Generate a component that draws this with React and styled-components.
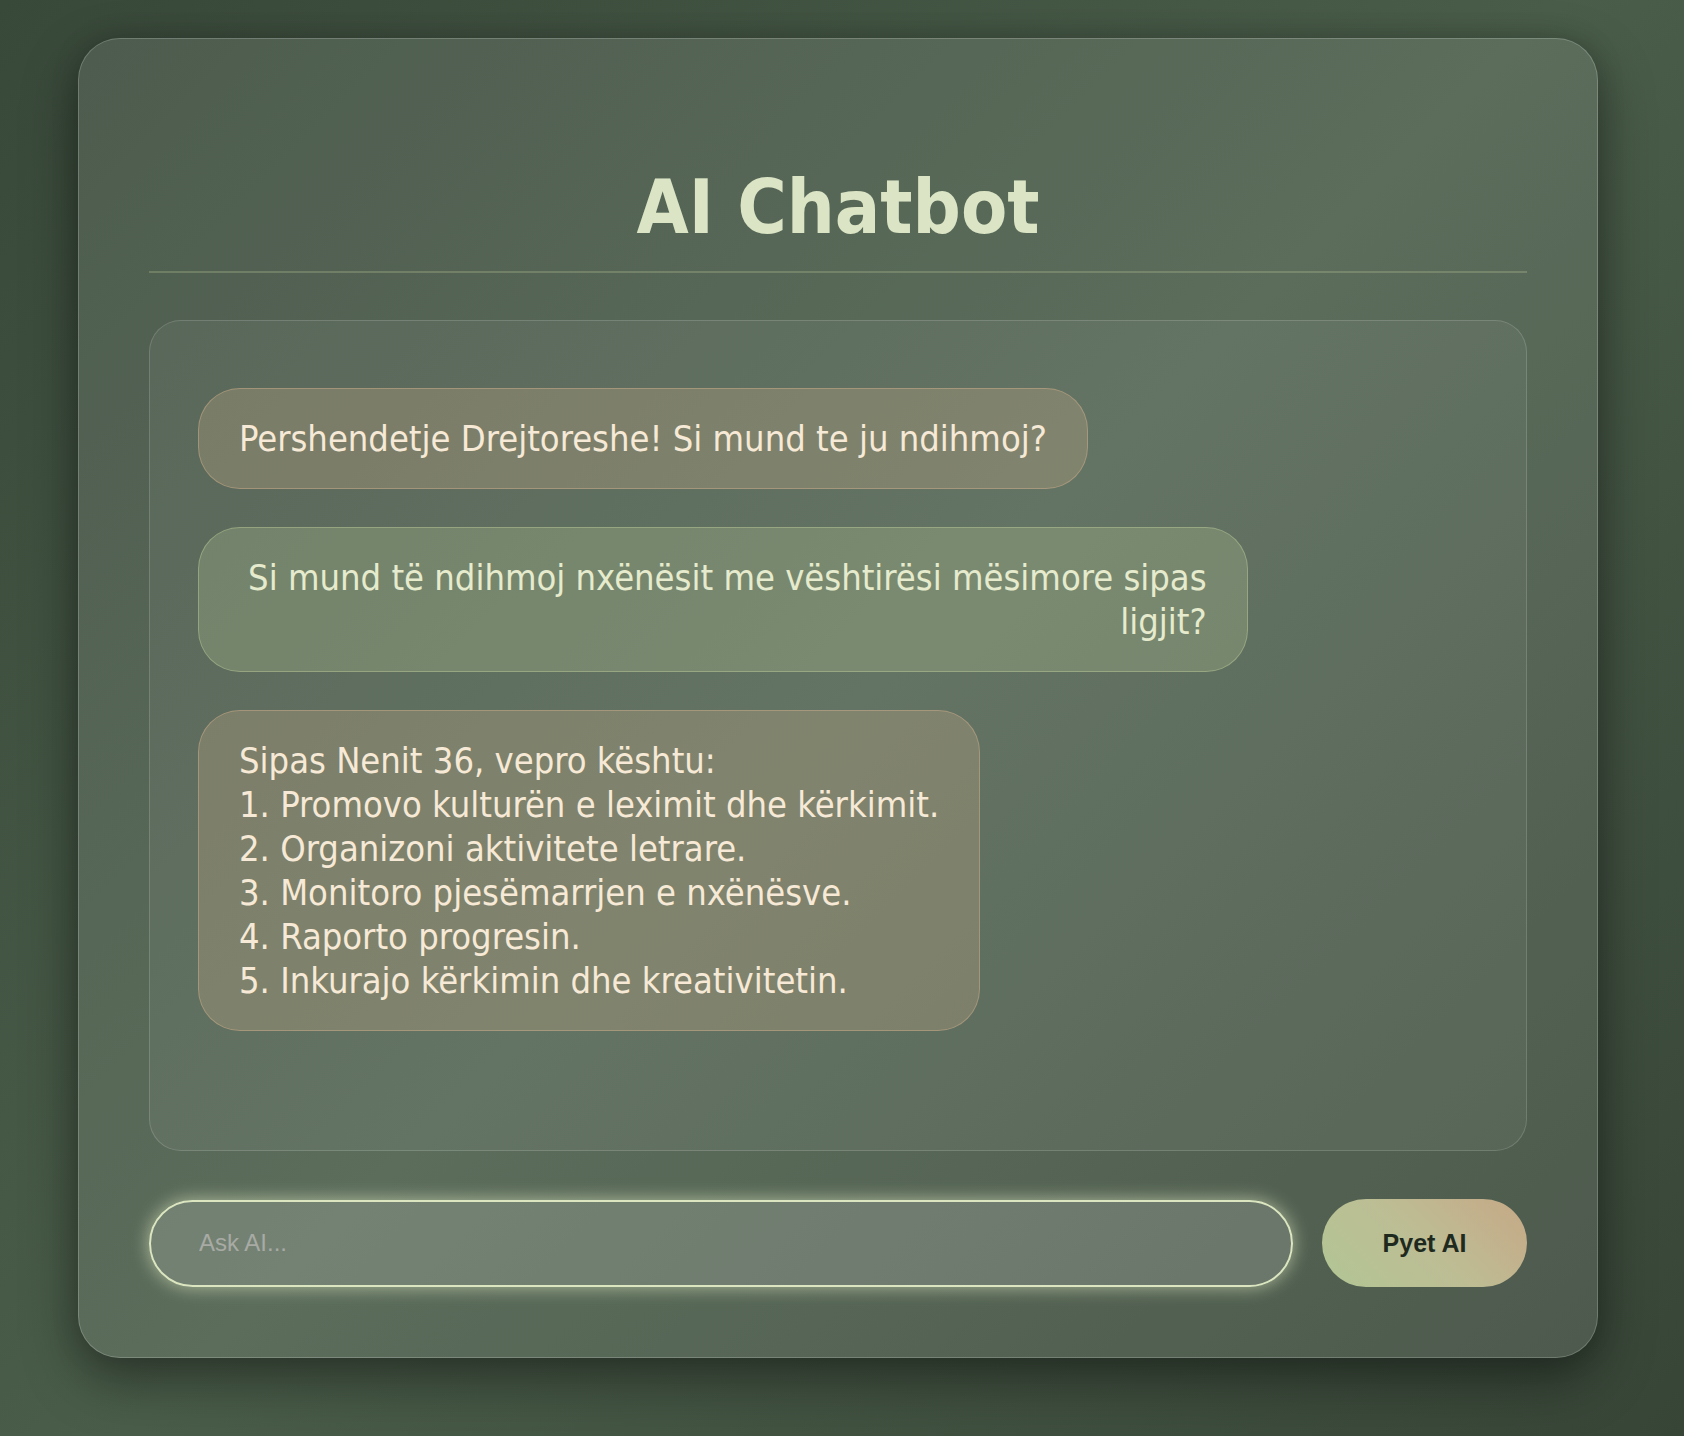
import React from "react";
import styled, { createGlobalStyle } from "styled-components";

const GlobalStyle = createGlobalStyle`
  html, body {
    margin: 0;
    padding: 0;
  }
  body {
    background: linear-gradient(135deg, #384839 0%, #4a5d4a 50%, #374537 100%);
    min-height: 100vh;
    font-family: "DejaVu Sans Condensed", "DejaVu Sans", sans-serif;
  }
`;

const Page = styled.div`
  min-height: 1436px;
  box-sizing: border-box;
  display: flex;
  justify-content: center;
  align-items: flex-start;
  padding: 38px 8px 0 0;
`;

const Card = styled.div`
  width: 1520px;
  box-sizing: border-box;
  padding: 0 70px 70px;
  border-radius: 42px;
  border: 1px solid rgba(255, 255, 255, 0.2);
  background: rgba(255, 255, 255, 0.1);
  box-shadow: 0 22px 55px rgba(0, 0, 0, 0.4), 0 0 28px rgba(0, 0, 0, 0.15);
  display: flex;
  flex-direction: column;
`;

const Title = styled.h1`
  margin: 123px 0 0;
  padding-bottom: 19px;
  border-bottom: 2px solid rgba(181, 197, 148, 0.3);
  text-align: center;
  font-family: "DejaVu Sans Condensed", "DejaVu Sans", sans-serif;
  font-stretch: condensed;
  font-weight: 700;
  font-size: 75px;
  line-height: 90px;
  color: #dbe5c5;
`;

const ChatBox = styled.div`
  margin-top: 47px;
  height: 831px;
  box-sizing: border-box;
  padding: 67px 48px 48px;
  border-radius: 32px;
  border: 1px solid rgba(255, 255, 255, 0.15);
  background: rgba(255, 255, 255, 0.05);
  display: flex;
  flex-direction: column;
  align-items: flex-start;
  gap: 38px;
  overflow: hidden;
`;

const Bubble = styled.div`
  box-sizing: border-box;
  max-width: 82%;
  padding: 28px 40px 27px;
  border-radius: 42px;
  font-family: "DejaVu Sans Condensed", "DejaVu Sans", sans-serif;
  font-stretch: condensed;
  font-size: 36px;
  line-height: 44px;
  white-space: pre-line;
  text-align: ${(p) => (p.$from === "user" ? "right" : "left")};
  color: ${(p) => (p.$from === "user" ? "#e6ebcd" : "#f6e9d6")};
  background: ${(p) =>
    p.$from === "user" ? "rgba(181, 197, 148, 0.28)" : "rgba(196, 168, 134, 0.3)"};
  border: 1px solid
    ${(p) =>
      p.$from === "user" ? "rgba(181, 197, 148, 0.5)" : "rgba(196, 168, 134, 0.55)"};
`;

const InputRow = styled.div`
  margin-top: 48px;
  display: flex;
  align-items: center;
  gap: 29px;
`;

const Input = styled.input`
  flex: 1;
  height: 87px;
  box-sizing: border-box;
  padding: 0 48px;
  border-radius: 44px;
  border: 2px solid #dbe6c1;
  background: rgba(255, 255, 255, 0.15);
  box-shadow: 0 0 18px rgba(222, 234, 192, 0.65);
  font-family: "Liberation Sans", Arial, sans-serif;
  font-size: 24px;
  color: #f4f4ec;
  caret-color: #ffffff;
  outline: none;

  &::placeholder {
    color: #a8aaa4;
  }
`;

const SendButton = styled.button`
  width: 205px;
  height: 88px;
  border: none;
  border-radius: 44px;
  background: linear-gradient(45deg, #b2c694 0%, #bdbd94 50%, #c6a886 100%);
  font-family: "Liberation Sans", Arial, sans-serif;
  font-weight: 700;
  font-size: 25px;
  color: #1f2a1f;
  cursor: pointer;
`;

const messages = [
  { from: "bot", text: "Pershendetje Drejtoreshe! Si mund te ju ndihmoj?" },
  {
    from: "user",
    text: "Si mund të ndihmoj nxënësit me vështirësi mësimore sipas ligjit?",
  },
  {
    from: "bot",
    text:
      "Sipas Nenit 36, vepro kështu:\n1. Promovo kulturën e leximit dhe kërkimit.\n2. Organizoni aktivitete letrare.\n3. Monitoro pjesëmarrjen e nxënësve.\n4. Raporto progresin.\n5. Inkurajo kërkimin dhe kreativitetin.",
  },
];

export default function App() {
  return (
    <>
      <GlobalStyle />
      <Page>
        <Card>
          <Title>AI Chatbot</Title>
          <ChatBox>
            {messages.map((m, i) => (
              <Bubble key={i} $from={m.from}>
                {m.text}
              </Bubble>
            ))}
          </ChatBox>
          <InputRow>
            <Input placeholder="Ask AI..." autoFocus />
            <SendButton>Pyet AI</SendButton>
          </InputRow>
        </Card>
      </Page>
    </>
  );
}
